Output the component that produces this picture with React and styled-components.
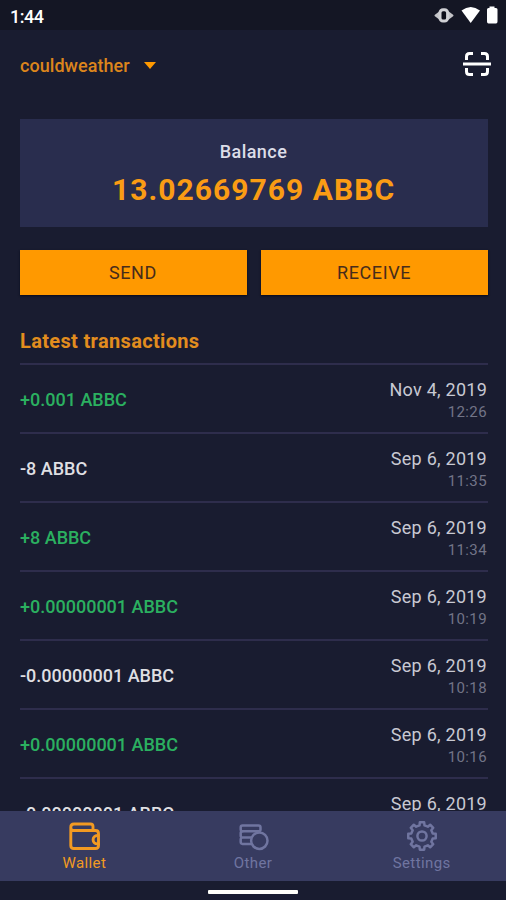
import React from 'react';
import styled, {createGlobalStyle} from 'styled-components';

const GlobalStyle = createGlobalStyle`
  body {
    margin: 0;
    background: #191c30;
    font-family: Roboto, "Noto Sans", sans-serif;
    overflow: hidden;
  }
  * {
    box-sizing: border-box;
  }
`

const Screen = styled.div`
  display: flex;
  flex-direction: column;
  height: 900px;
  background: #191c30;
  overflow: hidden;
`

const StatusBar = styled.div`
  flex: none;
  display: flex;
  align-items: center;
  justify-content: space-between;
  height: 30px;
  padding: 2px 7px 0 10px;
  background: #141624;
`

const Clock = styled.span`
  font-size: 18px;
  font-weight: 500;
  letter-spacing: -0.5px;
  color: #fff;
`

const StatusIcons = styled.div`
  display: flex;
  align-items: center;
  height: 20px;
`

const Header = styled.header`
  flex: none;
  display: flex;
  align-items: center;
  justify-content: space-between;
  height: 70px;
  padding: 0 15px 0 20px;
`

const Account = styled.div`
  display: flex;
  align-items: center;
  gap: 14px;
  font-size: 18px;
  font-weight: 500;
  letter-spacing: 0.05px;
  color: #dc851c;
`

const Caret = styled.span`
  border: 6.5px solid transparent;
  border-top: 7px solid #ff9900;
  border-bottom: 0;
`

const Main = styled.main`
  flex: 1;
  min-height: 0;
  padding: 19px 18px 0 20px;
  overflow: hidden;
`

const BalanceCard = styled.section`
  height: 108px;
  padding: 21px 1px 0 0;
  background: #292d4e;
  text-align: center;
`

const BalanceLabel = styled.div`
  font-size: 18px;
  line-height: 24px;
  font-weight: 500;
  letter-spacing: 0.45px;
  color: #dcdde8;
`

const BalanceAmount = styled.div`
  padding-top: 8px;
  font-size: 30px;
  line-height: 36px;
  font-weight: 700;
  letter-spacing: 1.05px;
  color: #fa9c14;
`

const Actions = styled.div`
  display: flex;
  gap: 14px;
  margin-top: 23px;
`

const ActionButton = styled.button`
  flex: 1;
  height: 45px;
  padding: 0 1px 0 0;
  border: 0;
  background: #ff9900;
  box-shadow: 0 1px 2px #080a1c;
  font-family: inherit;
  font-size: 18px;
  letter-spacing: 0.6px;
  color: #472c1b;
`

const SectionTitle = styled.h2`
  margin: 33px 0 0;
  font-size: 20px;
  line-height: 26px;
  font-weight: 700;
  letter-spacing: 0.34px;
  color: #e28d1e;
`

const TransactionList = styled.ul`
  margin: 9px 0 0;
  padding: 0;
  border-top: 2px solid #2e2d4c;
  list-style: none;
`

const TransactionRow = styled.li`
  display: flex;
  align-items: center;
  justify-content: space-between;
  height: 69px;
  padding: 2px 1px 0 0;
  border-bottom: 2px solid #2e2d4c;
`

const Amount = styled.span`
  font-size: 18px;
  font-weight: 500;
  color: ${({income}) => income ? '#2bb060' : '#dfdfe2'};
`

const When = styled.div`
  padding-top: 3px;
  text-align: right;
`

const Day = styled.div`
  font-size: 18px;
  line-height: 22px;
  letter-spacing: 0.25px;
  color: #c8c9d3;
`

const Time = styled.div`
  font-size: 15px;
  line-height: 22px;
  letter-spacing: 0.4px;
  color: #727487;
`

const TabBar = styled.nav`
  flex: none;
  display: grid;
  grid-template-columns: repeat(3, 1fr);
  height: 70px;
  background: #373b60;
`

const Tab = styled.div`
  display: flex;
  flex-direction: column;
  align-items: center;
  padding-top: 9px;
  font-size: 15px;
  line-height: 20px;
  letter-spacing: 0.4px;
  color: ${({active}) => active ? '#f29a22' : '#7075a0'};
`

const TabIcon = styled.svg`
  display: block;
  width: 32px;
  height: 32px;
  margin-bottom: 1px;
  fill: none;
  stroke: currentColor;
  stroke-width: ${({$weight}) => $weight || 2.5};
  stroke-linejoin: round;
  stroke-linecap: round;
`

const GestureArea = styled.div`
  flex: none;
  display: flex;
  justify-content: center;
  height: 19px;
  padding-top: 9px;
`

const GesturePill = styled.div`
  width: 90px;
  height: 4px;
  border-radius: 1px;
  background: #fffffa;
`

const transactions = [
  {amount: '+0.001 ABBC', day: 'Nov 4, 2019', time: '12:26'},
  {amount: '-8 ABBC', day: 'Sep 6, 2019', time: '11:35'},
  {amount: '+8 ABBC', day: 'Sep 6, 2019', time: '11:34'},
  {amount: '+0.00000001 ABBC', day: 'Sep 6, 2019', time: '10:19'},
  {amount: '-0.00000001 ABBC', day: 'Sep 6, 2019', time: '10:18'},
  {amount: '+0.00000001 ABBC', day: 'Sep 6, 2019', time: '10:16'},
  {amount: '-0.00000001 ABBC', day: 'Sep 6, 2019', time: '10:15'},
]

const DeviceIcons = () => (
  <svg width="65" height="20" viewBox="434 6 65 20">
    <path d="M435.500 15.500l4-3v6zM452.500 15.500l-4-3v6z" fill="#c4c4c8" stroke="#c4c4c8" strokeWidth="2" strokeLinejoin="round"/>
    <rect x="440" y="9.700" width="7.600" height="11.300" rx="3" fill="#0c0d18" stroke="#d0d0d4" strokeWidth="3"/>
    <path d="M461.500 10.500Q470.700 3.500 480 10.500L470.700 23z" fill="#fff"/>
    <path d="M489.500 8V6.500h5V8h1.500q1.500 0 1.500 1.500v12q0 2-1.500 2h-7.500q-1.500 0-1.500-2v-12q0-1.500 1.500-1.500z" fill="#fff"/>
  </svg>
)

const ScanSvg = styled.svg`
  display: block;
  margin-bottom: 2px;
  fill: none;
  stroke: #fff;
  stroke-width: 3;
`

const ScanIcon = () => (
  <ScanSvg width="28" height="26" viewBox="0 0 28 26">
    <path d="M3.500 9V5.500q0-3 3-3H10M18 2.500h3.500q3 0 3 3V9M24.500 17v3.500q0 3-3 3H18M10 23.500H6.500q-3 0-3-3V17"/>
    <path d="M0 13h28"/>
  </ScanSvg>
)

const WalletIcon = () => (
  <TabIcon viewBox="0 0 32 32" $weight={2.9}>
    <path d="M25 10.500V6.500q0-2.500-2.500-2.500H6q-3.200 0-3.200 3.200V25.500q0 3 3 3h21.700q3 0 3-3V13.500q0-3-3-3H5.500q-2.700 0-2.700-3"/>
    <path d="M30.500 15.500h-1.200a4.200 4.200 0 0 0 0 8.400h1.200"/>
  </TabIcon>
)

const OtherIcon = () => (
  <TabIcon viewBox="0 0 32 32">
    <circle cx="22.300" cy="20.700" r="8.200"/>
    <path d="M5.500 5.500h16q2 0 2 2v2q0 1.800-2 1.800h-16q-1.800 0-1.800-1.800V7.300q0-1.800 1.800-1.800z"/>
    <path d="M5.500 11.300q-1.800 0-1.800 1.800v2.700q0 1.800 1.800 1.800h8.300M5.500 17.600q-1.800 0-1.800 1.800v2.700q0 1.800 1.800 1.800h8.900"/>
  </TabIcon>
)

// Eight teeth, four corners each, as [radius, degrees from the tooth's axis]
const toothCorners = [[11, -13], [13.900, -9], [13.900, 9], [11, 13]]
const gearPoints = Array.from({length: 8}, (_, tooth) =>
  toothCorners.map(([radius, offset]) => {
    const angle = (tooth * 45 + offset) * Math.PI / 180
    return `${16 + radius * Math.cos(angle)},${16 + radius * Math.sin(angle)}`
  }).join(' ')
).join(' ')

const SettingsIcon = () => (
  <TabIcon viewBox="0 0 32 32">
    <circle cx="16" cy="16" r="4.600"/>
    <polygon points={gearPoints}/>
  </TabIcon>
)

const App = () => {
  return (
    <Screen>
      <GlobalStyle/>
      <StatusBar>
        <Clock>1:44</Clock>
        <StatusIcons>
          <DeviceIcons/>
        </StatusIcons>
      </StatusBar>

      <Header>
        <Account>
          couldweather
          <Caret/>
        </Account>
        <ScanIcon/>
      </Header>

      <Main>
        <BalanceCard>
          <BalanceLabel>Balance</BalanceLabel>
          <BalanceAmount>13.02669769 ABBC</BalanceAmount>
        </BalanceCard>

        <Actions>
          <ActionButton>SEND</ActionButton>
          <ActionButton>RECEIVE</ActionButton>
        </Actions>

        <SectionTitle>Latest transactions</SectionTitle>
        <TransactionList>
          {transactions.map(({amount, day, time}) => (
            <TransactionRow key={day + time}>
              <Amount income={amount.startsWith('+') ? 1 : undefined}>{amount}</Amount>
              <When>
                <Day>{day}</Day>
                <Time>{time}</Time>
              </When>
            </TransactionRow>
          ))}
        </TransactionList>
      </Main>

      <TabBar>
        <Tab active={1}>
          <WalletIcon/>
          Wallet
        </Tab>
        <Tab>
          <OtherIcon/>
          Other
        </Tab>
        <Tab>
          <SettingsIcon/>
          Settings
        </Tab>
      </TabBar>
      <GestureArea>
        <GesturePill/>
      </GestureArea>
    </Screen>
  )
}

export default App;
